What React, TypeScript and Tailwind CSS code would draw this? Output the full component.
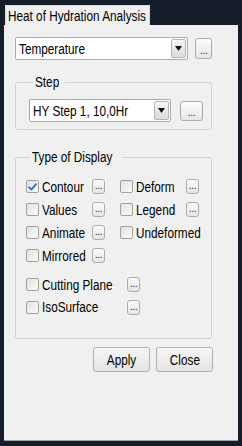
import React from "react";

const font = { fontFamily: '"Liberation Sans", Arial, sans-serif' };

function T({ children, center = false }: { children: React.ReactNode; center?: boolean }) {
  return (
    <span
      className={
        "inline-block whitespace-nowrap scale-x-[0.84] " + (center ? "origin-center" : "origin-left")
      }
    >
      {children}
    </span>
  );
}

function Dots({ className = "" }: { className?: string }) {
  return (
    <div
      className={
        "flex items-end justify-center border border-[#acacac] rounded-[3px] bg-gradient-to-b from-[#fbfbfb] to-[#e6e6e6] text-[#333] leading-none " +
        className
      }
    >
      <span className="text-[11px] tracking-[-0.5px] pb-[2px]">...</span>
    </div>
  );
}

function Check({ checked = false }: { checked?: boolean }) {
  return (
    <div className="w-[13px] h-[13px] shrink-0 border border-[#a0a0a0] rounded-[2px] bg-gradient-to-br from-[#e2e2e2] to-[#fafafa] flex items-center justify-center">
      {checked && (
        <svg width="9" height="8" viewBox="0 0 9 8">
          <path d="M1 4.2 L3.4 6.6 L8 1.2" fill="none" stroke="#2d6bd0" strokeWidth="1.8" strokeLinecap="round" strokeLinejoin="round" />
        </svg>
      )}
    </div>
  );
}

function Combo({ text, className = "" }: { text: string; className?: string }) {
  return (
    <div className={"flex items-center bg-white border border-[#a7abb0] rounded-[2px] " + className}>
      <span className="flex-1 pl-[3px] text-[14px] text-black leading-none pt-[1px]">
        <T>{text}</T>
      </span>
      <div className="w-[15px] h-[19px] mr-[1px] border border-[#b4b4b4] rounded-[2px] bg-gradient-to-b from-[#f6f6f6] to-[#dcdcdc] flex items-center justify-center">
        <svg width="7" height="5" viewBox="0 0 7 5">
          <path d="M0 0 H7 L3.5 5 Z" fill="#111" />
        </svg>
      </div>
    </div>
  );
}

function Item({ label, checked, labelW, btn = true }: { label: string; checked?: boolean; labelW: string; btn?: boolean }) {
  return (
    <div className="flex items-center">
      <div className={"flex items-center gap-[3px] " + labelW}>
        <Check checked={checked} />
        <span className="text-[14px] text-black leading-none">
          <T>{label}</T>
        </span>
      </div>
      {btn && <Dots className="w-[13px] h-[15px]" />}
    </div>
  );
}

export default function App() {
  return (
    <div className="w-[242px] h-[446px] bg-[#151d2a] pt-[5px] pl-[4px]" style={font}>
      <div className="ml-[1px] w-[145px] h-[20px] bg-[#f0f0f0] border-t border-l border-r border-[#dcdcdc] flex items-center pl-[2px]">
        <span className="text-[14px] text-black leading-none">
          <T>Heat of Hydration Analysis</T>
        </span>
      </div>
      <div className="w-[234px] h-[416px] bg-[#f0f0f0] border-b border-[#a0a0a0] pl-[11px] pt-[12px]">
        <div className="flex items-center gap-[7px]">
          <Combo text="Temperature" className="w-[173px] h-[23px]" />
          <Dots className="w-[17px] h-[21px]" />
        </div>

        <fieldset className="mt-[14px] w-[197px] border border-[#d3d3c6] rounded-[3px] pl-[13px] pt-[9px] pb-[7px]">
          <legend className="ml-[4px] px-[2px] w-[32px] text-[14px] leading-[16px] text-black">
            <T>Step</T>
          </legend>
          <div className="flex items-center gap-[9px]">
            <Combo text="HY Step 1, 10,0Hr" className="w-[142px] h-[23px]" />
            <Dots className="w-[23px] h-[20px]" />
          </div>
        </fieldset>

        <fieldset className="mt-[19px] w-[197px] border border-[#d3d3c6] rounded-[3px] pl-[10px] pt-[10px] pb-[20px]">
          <legend className="ml-[4px] px-[2px] w-[92px] text-[14px] leading-[16px] text-black">
            <T>Type of Display</T>
          </legend>
          <div className="grid grid-cols-[94px_1fr] auto-rows-[23px] items-center">
            <Item label="Contour" checked labelW="w-[66px]" />
            <Item label="Deform" labelW="w-[66px]" />
            <Item label="Values" labelW="w-[66px]" />
            <Item label="Legend" labelW="w-[66px]" />
            <Item label="Animate" labelW="w-[66px]" />
            <Item label="Undeformed" labelW="w-[66px]" btn={false} />
            <Item label="Mirrored" labelW="w-[66px]" />
          </div>
          <div className="mt-[6px] flex flex-col">
            <div className="h-[23px] flex items-center">
              <Item label="Cutting Plane" labelW="w-[101px]" />
            </div>
            <div className="h-[22px] flex items-center">
              <Item label="IsoSurface" labelW="w-[101px]" />
            </div>
          </div>
        </fieldset>

        <div className="w-[198px] mt-[8px] flex justify-end gap-[6px]">
          <button className="w-[57px] h-[25px] border border-[#b0b0b0] rounded-[3px] bg-gradient-to-b from-[#f6f6f6] to-[#e4e4e4] text-[14px] text-black leading-none">
            <T center>Apply</T>
          </button>
          <button className="w-[57px] h-[25px] border border-[#b0b0b0] rounded-[3px] bg-gradient-to-b from-[#f6f6f6] to-[#e4e4e4] text-[14px] text-black leading-none">
            <T center>Close</T>
          </button>
        </div>
      </div>
    </div>
  );
}
